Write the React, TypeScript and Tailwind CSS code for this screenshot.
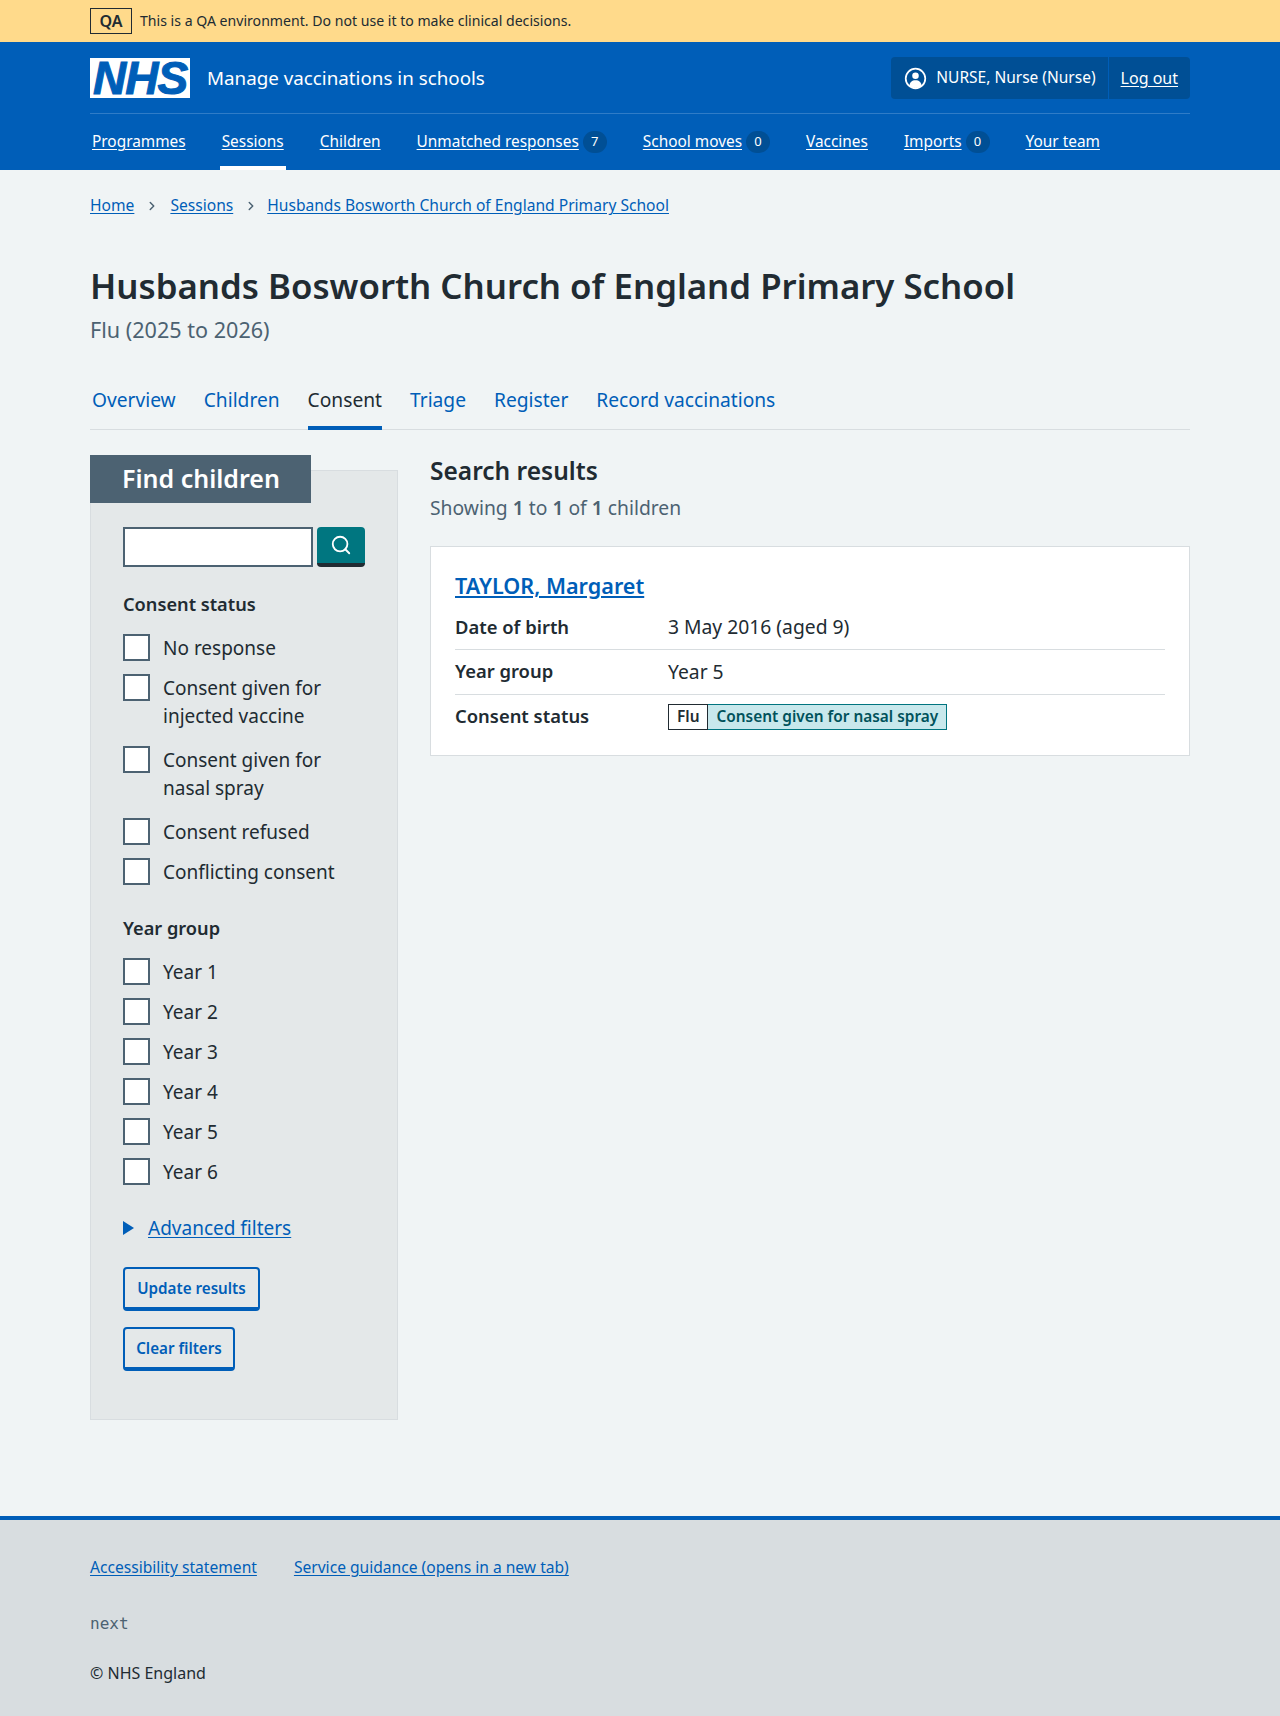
import { ChevronRight, Search } from "lucide-react";

const navItems = [
  { label: "Programmes" },
  { label: "Sessions", active: true },
  { label: "Children" },
  { label: "Unmatched responses", count: 7 },
  { label: "School moves", count: 0 },
  { label: "Vaccines" },
  { label: "Imports", count: 0 },
  { label: "Your team" },
];

const tabs = ["Overview", "Children", "Consent", "Triage", "Register", "Record vaccinations"];

const consentOptions = [
  { label: "No response" },
  { label: "Consent given for injected vaccine", wrapped: true },
  { label: "Consent given for nasal spray", wrapped: true },
  { label: "Consent refused" },
  { label: "Conflicting consent" },
];

const yearOptions = ["Year 1", "Year 2", "Year 3", "Year 4", "Year 5", "Year 6"];

function Checkbox({ label, wrapped }: { label: string; wrapped?: boolean }) {
  return (
    <label className={`flex items-start gap-[13px] ${wrapped ? "pb-[4px]" : ""}`}>
      <span className="h-[27px] w-[27px] shrink-0 border-2 border-[#4c6272] bg-white"></span>
      <span className={`text-[19px] leading-[28px] text-[#212b32] ${wrapped ? "max-w-[170px]" : ""}`}>{label}</span>
    </label>
  );
}

function Header() {
  return (
    <header>
      <div className="bg-[#ffda8b] h-[42px]">
        <div className="mx-[90px] flex h-full items-center gap-2">
          <span className="flex h-[26px] w-[42px] items-center justify-center border border-[#212b32] text-[16px] font-semibold text-[#212b32]">QA</span>
          <span className="text-[14.1px] text-[#212b32]">This is a QA environment. Do not use it to make clinical decisions.</span>
        </div>
      </div>
      <div className="bg-[#005eb8] h-[128px] text-white">
        <div className="mx-[90px]">
          <div className="flex h-[72px] items-start justify-between border-b border-[#2f7cc7] pt-[15px]">
            <div className="flex items-center gap-[17px] pt-[1px]">
              <span className="flex h-10 w-[100px] items-center justify-center bg-white font-['Liberation_Sans'] text-[46px] font-bold italic leading-none tracking-[-1px] text-[#005eb8] [-webkit-text-stroke:1px_#005eb8]">NHS</span>
              <span className="text-[18.8px]">Manage vaccinations in schools</span>
            </div>
            <div className="flex h-[42px] items-stretch rounded bg-[#004f95] text-[15.5px]">
              <div className="flex items-center gap-[9px] pl-[13px] pr-3">
                <svg viewBox="0 0 24 24" className="h-[23px] w-[23px]" fill="none">
                  <circle cx="12" cy="12" r="10.2" stroke="white" strokeWidth="1.8" />
                  <circle cx="12" cy="9.2" r="3.4" fill="white" />
                  <path d="M5.6 19.5c.3-3.8 2.8-5.8 6.4-5.8s6.1 2 6.4 5.8A10 10 0 0 1 12 22a10 10 0 0 1-6.4-2.5z" fill="white" />
                </svg>
                <span>NURSE, Nurse (Nurse)</span>
              </div>
              <div className="flex items-center border-l border-[#005eb8] px-3 text-[16px]">
                <a className="underline underline-offset-2">Log out</a>
              </div>
            </div>
          </div>
          <nav className="flex h-[56px] items-stretch gap-[36px] pl-[2px] text-[15.4px]">
            {navItems.map((item) => (
              <div key={item.label} className={`-mx-[2px] flex items-center gap-[4px] border-y-4 border-t-transparent px-[2px] ${item.active ? "border-b-white" : "border-b-transparent"}`}>
                <a className="underline underline-offset-2">{item.label}</a>
                {item.count !== undefined && (
                  <span className="flex h-[22px] w-6 items-center justify-center rounded-full bg-[#004f95] text-[13px]">{item.count}</span>
                )}
              </div>
            ))}
          </nav>
        </div>
      </div>
    </header>
  );
}

function Filters() {
  return (
    <aside className="w-[308px] shrink-0 pt-[15px]">
      <div className="border border-[#d8dde0] bg-[#e4e8e9] pb-[48px]">
        <h2 className="-ml-px -mt-[16px] flex h-[48px] w-[221px] items-center bg-[#4c6272] pl-[32px] text-[25px] font-semibold text-white">Find children</h2>
        <div className="px-[32px]">
          <div className="mt-6 flex gap-[4px]">
            <div className="h-10 w-[190px] border-2 border-[#4c6272] bg-white"></div>
            <button className="flex h-10 w-[48px] items-center justify-center rounded border-b-4 border-[#212b32] bg-[#007680] text-white">
              <Search size={22} strokeWidth={2} />
            </button>
          </div>
          <h3 className="mt-[23px] text-[18.2px] font-semibold leading-[28px] text-[#212b32]">Consent status</h3>
          <div className="mt-[16px] flex flex-col gap-[12px]">
            {consentOptions.map((o) => (
              <Checkbox key={o.label} label={o.label} wrapped={o.wrapped} />
            ))}
          </div>
          <h3 className="mt-[28px] text-[18.2px] font-semibold leading-[28px] text-[#212b32]">Year group</h3>
          <div className="mt-[16px] flex flex-col gap-[12px]">
            {yearOptions.map((o) => (
              <Checkbox key={o} label={o} />
            ))}
          </div>
          <div className="mt-[28px] flex h-[28px] items-center gap-[14px] text-[19px] text-[#005eb8]">
            <span className="h-0 w-0 border-y-[7px] border-l-[11px] border-y-transparent border-l-[#005eb8]"></span>
            <a className="underline underline-offset-2">Advanced filters</a>
          </div>
          <div className="mt-[25px] flex flex-col items-start gap-[16px]">
            <button className="h-[44px] w-[137px] rounded border-2 border-b-4 border-[#005eb8] text-[15.2px] font-semibold text-[#005eb8]">Update results</button>
            <button className="h-[44px] w-[112px] rounded border-2 border-b-4 border-[#005eb8] text-[15.2px] font-semibold text-[#005eb8]">Clear filters</button>
          </div>
        </div>
      </div>
    </aside>
  );
}

function Results() {
  const rowLabel = "w-[213px] shrink-0 pb-[2px] text-[18.4px] font-semibold text-[#212b32]";
  const rowValue = "text-[19.3px] text-[#212b32]";
  return (
    <section className="flex-1">
      <h2 className="text-[24.5px] font-semibold leading-[32px] text-[#212b32]">Search results</h2>
      <p className="mt-[7px] text-[19.3px] leading-[28px] text-[#4c6272]">
        Showing <b className="font-semibold">1</b> to <b className="font-semibold">1</b> of <b className="font-semibold">1</b> children
      </p>
      <div className="mt-[24px] border border-[#d8dde0] bg-white px-6 pt-[23px] pb-[16px]">
        <a className="text-[21.6px] font-semibold leading-[32px] text-[#005eb8] underline underline-offset-2">TAYLOR, Margaret</a>
        <div className="flex h-[48px] items-center border-b border-[#d8dde0] pt-[4px]">
          <div className={rowLabel}>Date of birth</div>
          <div className={rowValue}>3 May 2016 (aged 9)</div>
        </div>
        <div className="flex h-[45px] items-center border-b border-[#d8dde0]">
          <div className={rowLabel}>Year group</div>
          <div className={rowValue}>Year 5</div>
        </div>
        <div className="flex h-[44px] items-center">
          <div className={rowLabel}>Consent status</div>
          <div className="flex h-[26px] items-stretch text-[15.4px] font-semibold">
            <span className="flex items-center border border-[#212b32] bg-white px-2 text-[#212b32]">Flu</span>
            <span className="flex items-center border border-l-0 border-[#00747f] bg-[#c8e8ec] px-2 text-[#00525b]">Consent given for nasal spray</span>
          </div>
        </div>
      </div>
    </section>
  );
}

export default function App() {
  return (
    <div className="min-h-[1716px] bg-[#f0f4f5] font-['Noto_Sans',sans-serif]">
      <Header />
      <main className="mx-[90px]">
        <nav className="flex h-[66px] items-center pt-[6px] text-[15.6px] text-[#005eb8]">
          <a className="underline underline-offset-2">Home</a>
          <ChevronRight size={14} strokeWidth={2.5} className="mx-[11px] text-[#4c6272]" />
          <a className="underline underline-offset-2">Sessions</a>
          <ChevronRight size={14} strokeWidth={2.5} className="ml-[11px] mr-[9px] text-[#4c6272]" />
          <a className="underline underline-offset-2">Husbands Bosworth Church of England Primary School</a>
        </nav>
        <h1 className="mt-[26px] text-[34.8px] font-semibold leading-[48px] text-[#212b32]">Husbands Bosworth Church of England Primary School</h1>
        <p className="mt-[4px] text-[21.6px] leading-[32px] text-[#4c6272]">Flu (2025 to 2026)</p>
        <div className="mt-[29px] flex h-[55px] items-stretch gap-[28px] border-b border-[#d8dde0] px-[2px] text-[19.2px]">
          {tabs.map((t) =>
            t === "Consent" ? (
              <span key={t} className="-mb-px flex items-center border-b-4 border-[#005eb8] text-[#212b32]">{t}</span>
            ) : (
              <a key={t} className="flex items-center pb-[3px] text-[#005eb8]">{t}</a>
            )
          )}
        </div>
        <div className="mt-[25px] flex gap-[32px]">
          <Filters />
          <Results />
        </div>
      </main>
      <footer className="mt-[96px] h-[201px] border-t-4 border-[#005eb8] bg-[#d8dde0] px-[90px] pt-[35px]">
        <div className="flex gap-[37px] text-[15.6px] leading-[24px] text-[#005eb8]">
          <a className="underline underline-offset-2">Accessibility statement</a>
          <a className="underline underline-offset-2">Service guidance (opens in a new tab)</a>
        </div>
        <p className="mt-[33px] font-['DejaVu_Sans_Mono',monospace] text-[16px] leading-[24px] text-[#4c6272]">next</p>
        <p className="mt-[25px] text-[16px] leading-[24px] text-[#212b32]">© NHS England</p>
      </footer>
    </div>
  );
}
